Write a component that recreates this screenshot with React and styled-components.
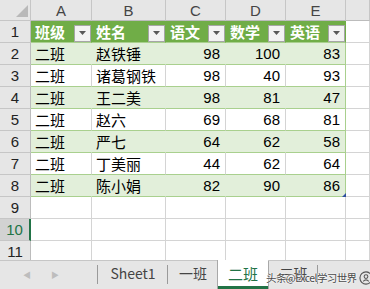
import React from "react";
import styled, { createGlobalStyle } from "styled-components";

const GlobalStyle = createGlobalStyle`
  html, body { margin: 0; padding: 0; background: #fff; }
  body { width: 370px; height: 289px; overflow: hidden; }
`;

const cols = ["A", "B", "C", "D", "E"];
const headers = ["班级", "姓名", "语文", "数学", "英语"];
const rows = [
  ["二班", "赵铁锤", 98, 100, 83],
  ["二班", "诸葛钢铁", 98, 40, 93],
  ["二班", "王二美", 98, 81, 47],
  ["二班", "赵六", 69, 68, 81],
  ["二班", "严七", 64, 62, 58],
  ["二班", "丁美丽", 44, 62, 64],
  ["二班", "陈小娟", 82, 90, 86],
];

const CJK = `"Noto Sans CJK SC", "Liberation Sans", sans-serif`;
const NUM = `"Liberation Sans", "Noto Sans CJK SC", sans-serif`;

const App = () => {
  return (
    <Page>
      <GlobalStyle />
      <Sheet>
        <Corner>
          <svg width="12" height="12" viewBox="0 0 12 12">
            <polygon points="12,0 12,12 0,12" fill="#b9b9b9" />
          </svg>
        </Corner>
        {cols.map((c) => (
          <ColHead key={c}>{c}</ColHead>
        ))}
        <ColHead />

        <RowHead>1</RowHead>
        {headers.map((h) => (
          <HeadCell key={h}>
            <span>{h}</span>
            <FilterBtn>
              <svg width="7" height="4" viewBox="0 0 7 4">
                <polygon points="0,0 7,0 3.5,4" fill="#595959" />
              </svg>
            </FilterBtn>
          </HeadCell>
        ))}
        <Cell />

        {rows.map((r, ri) => {
          const band = ri % 2 === 0;
          return (
            <React.Fragment key={ri}>
              <RowHead>{ri + 2}</RowHead>
              {r.map((v, ci) => (
                <DataCell
                  key={ci}
                  $band={band}
                  $num={typeof v === "number"}
                  $last={ci === 4}
                >
                  {v}
                  {ri === rows.length - 1 && ci === 4 && <Handle />}
                </DataCell>
              ))}
              <Cell />
            </React.Fragment>
          );
        })}

        {[9, 10, 11].map((n) => (
          <React.Fragment key={n}>
            <RowHead $sel={n === 10}>{n}</RowHead>
            {cols.map((c) => (
              <Cell key={c} />
            ))}
            <Cell />
          </React.Fragment>
        ))}
      </Sheet>

      <TabBar>
        <Nav>
          <Arrow>◀</Arrow>
          <Arrow>▶</Arrow>
        </Nav>
        <Tab $w={70} $sep>Sheet1</Tab>
        <Tab $w={50}>一班</Tab>
        <Tab $w={50} $active>二班</Tab>
        <Tab $w={50} $sep $edge>三班</Tab>
        <Watermark>
          头条@Excel学习世界
          <Logo>
            <svg width="14" height="14" viewBox="0 0 15 15">
              <circle cx="7.5" cy="7.5" r="6.5" fill="none" stroke="#555" strokeWidth="1.2" />
              <circle cx="7.5" cy="6" r="2" fill="none" stroke="#555" strokeWidth="1.1" />
              <path d="M4.5 11 Q7.5 8 10.5 11" fill="none" stroke="#555" strokeWidth="1.1" />
            </svg>
          </Logo>
        </Watermark>
      </TabBar>
    </Page>
  );
};

export default App;

const Page = styled.div`
  width: 370px;
  height: 289px;
  display: flex;
  flex-direction: column;
  position: relative;
  overflow: hidden;
  background: #fff;
`;

const Sheet = styled.div`
  display: grid;
  grid-template-columns: 31px 61px 74px 60px 60px 60px 1fr;
  grid-template-rows: 21px repeat(11, 22px);
  height: 260px;
  overflow: hidden;
  flex-shrink: 0;
`;

const Cell = styled.div`
  box-sizing: border-box;
  border-right: 1px solid #d4d4d4;
  border-bottom: 1px solid #d4d4d4;
  background: #fff;
`;

const Corner = styled(Cell)`
  background: #e6e6e6;
  border-right-color: #c6c6c6;
  border-bottom-color: #c6c6c6;
  display: flex;
  align-items: flex-end;
  justify-content: flex-end;
  padding: 0 2px 3px 0;
`;

const ColHead = styled(Cell)`
  background: #e6e6e6;
  border-right-color: #c6c6c6;
  border-bottom-color: #bcbcbc;
  font-family: ${NUM};
  font-size: 15px;
  color: #444;
  display: flex;
  align-items: center;
  justify-content: center;
  padding-top: 1px;
`;

const RowHead = styled(Cell)`
  background: ${(p) => (p.$sel ? "#d2d2d2" : "#e6e6e6")};
  border-right: ${(p) => (p.$sel ? "2px solid #217346" : "1px solid #bcbcbc")};
  border-bottom-color: #c6c6c6;
  font-family: ${NUM};
  font-size: 15px;
  color: ${(p) => (p.$sel ? "#217346" : "#222")};
  display: flex;
  align-items: center;
  justify-content: center;
`;

const HeadCell = styled(Cell)`
  background: #70ad47;
  border-right-color: #70ad47;
  border-bottom-color: #a9d08e;
  color: #fff;
  font-family: ${CJK};
  font-weight: bold;
  font-size: 15px;
  display: flex;
  align-items: center;
  justify-content: space-between;
  padding: 0 0 0 4px;
  span {
    line-height: 1;
  }
`;

const FilterBtn = styled.div`
  box-sizing: border-box;
  width: 17px;
  height: 17px;
  margin-top: 3px;
  background: #f3f3f3;
  border: 1px solid #a6a6a6;
  display: flex;
  align-items: center;
  justify-content: center;
`;

const DataCell = styled(Cell)`
  position: relative;
  background: ${(p) => (p.$band ? "#e2efda" : "#fff")};
  border-right-color: ${(p) => (p.$last ? "#a9d08e" : p.$band ? "#e2efda" : "#d4d4d4")};
  border-bottom-color: #a9d08e;
  color: #000;
  font-family: ${(p) => (p.$num ? NUM : CJK)};
  font-size: 15px;
  display: flex;
  align-items: center;
  justify-content: ${(p) => (p.$num ? "flex-end" : "flex-start")};
  padding: ${(p) => (p.$num ? "0 5px 0 0" : "0 0 0 4px")};
`;

const Handle = styled.div`
  position: absolute;
  right: -1px;
  bottom: -1px;
  width: 0;
  height: 0;
  border-left: 4px solid transparent;
  border-bottom: 4px solid #2f4f9f;
`;

const TabBar = styled.div`
  position: relative;
  flex: 1;
  box-sizing: border-box;
  background: #e6e6e6;
  border-top: 1px solid #c6c6c6;
  display: flex;
  align-items: stretch;
  font-family: ${CJK};
`;

const Nav = styled.div`
  width: 98px;
  display: flex;
  align-items: center;
  padding-left: 23px;
  gap: 20px;
  box-sizing: border-box;
  border-right: 1px solid #9a9a9a;
  margin: 4px 0 5px;
`;

const Arrow = styled.span`
  font-size: 8px;
  color: #bdbdbd;
`;

const Tab = styled.div`
  position: relative;
  box-sizing: border-box;
  width: ${(p) => p.$w}px;
  display: flex;
  align-items: center;
  justify-content: center;
  font-size: ${(p) => (p.$active ? "15px" : "14px")};
  color: ${(p) => (p.$active ? "#217346" : "#444")};
  background: ${(p) => (p.$active ? "#fff" : "transparent")};
  margin-top: ${(p) => (p.$active ? "-1px" : "0")};
  border-left: ${(p) => (p.$edge ? "1px solid #a8a8a8" : "none")};
  border-bottom: ${(p) => (p.$active ? "3px solid #217346" : "none")};
  box-shadow: ${(p) => (p.$active ? "-1px 0 0 #a8a8a8" : "none")};
  padding-bottom: ${(p) => (p.$active ? "0" : "4px")};
  ${(p) =>
    p.$sep &&
    `
    &::after {
      content: "";
      position: absolute;
      right: 0;
      top: 4px;
      bottom: 5px;
      width: 1px;
      background: #9a9a9a;
    }
  `}
`;

const Watermark = styled.div`
  position: absolute;
  left: 266px;
  top: 9px;
  display: flex;
  align-items: center;
  gap: 1px;
  font-family: ${CJK};
  font-size: 10.5px;
  color: #4a4a4a;
  text-shadow: 0 0 2px #fff, 0 0 2px #fff;
  white-space: nowrap;
  letter-spacing: -0.6px;
`;

const Logo = styled.span`
  display: flex;
  margin-left: 1px;
`;
